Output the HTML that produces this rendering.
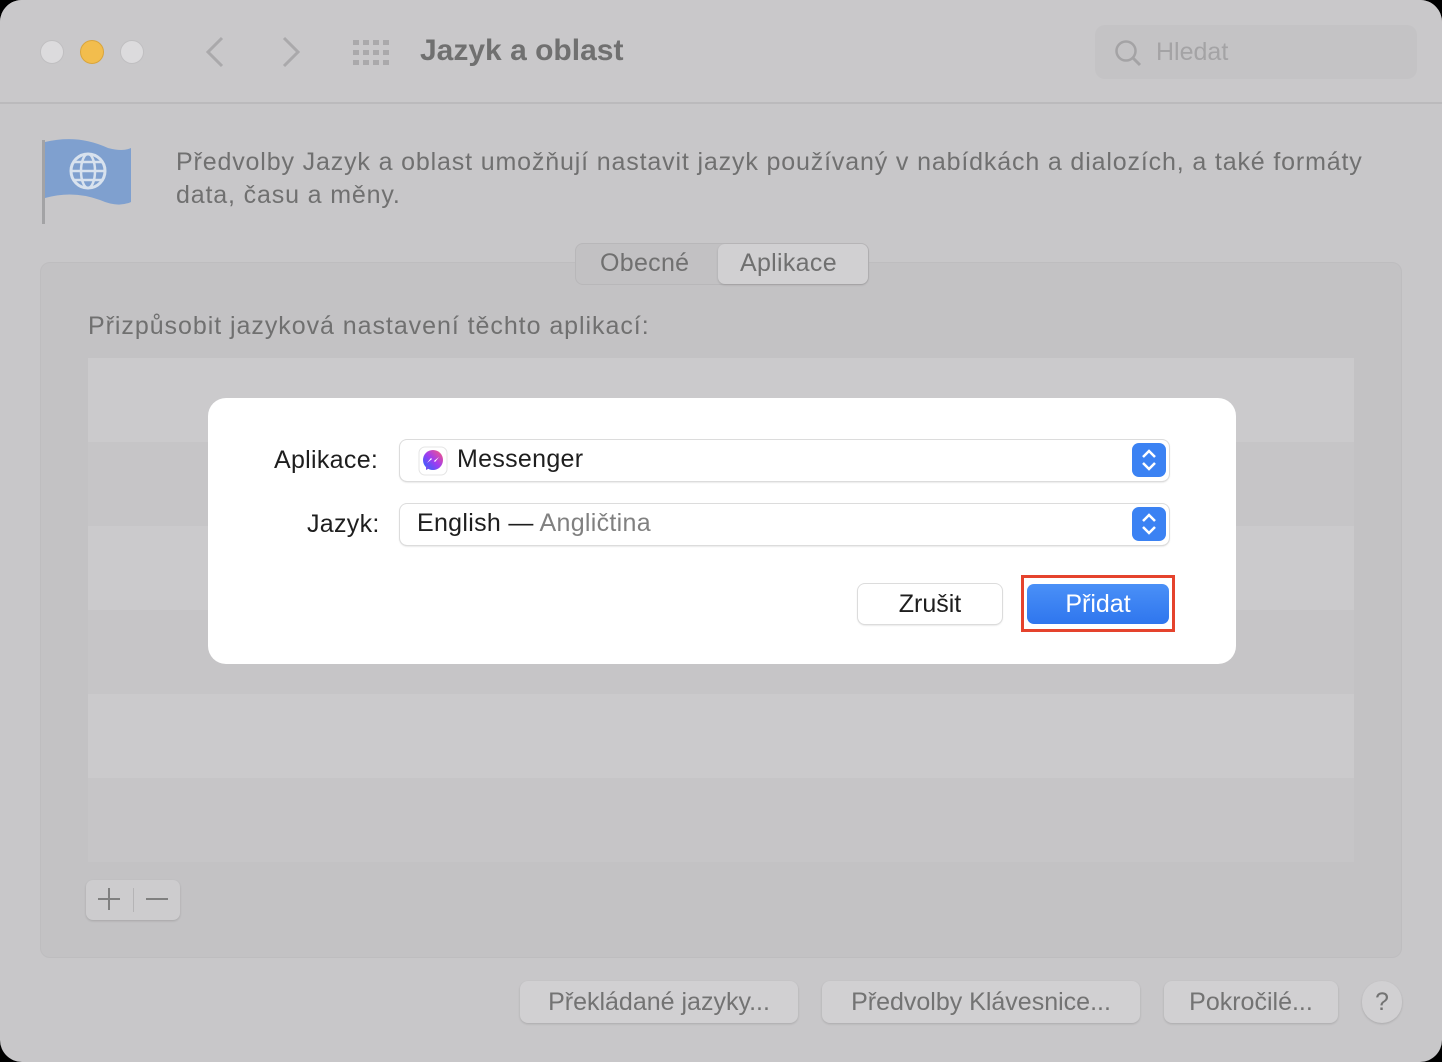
<!DOCTYPE html>
<html><head><meta charset="utf-8"><style>
*{margin:0;padding:0;box-sizing:border-box}
body{width:1442px;height:1062px;background:#000;font-family:"Liberation Sans",sans-serif;overflow:hidden;position:relative}
.win{position:absolute;left:0;top:0;width:1442px;height:1062px;background:#c8c7c9;border-radius:22px 22px 22px 22px;overflow:hidden}
.tb{position:absolute;left:0;top:0;width:1442px;height:104px;background:#c9c8ca;border-bottom:2px solid #bbbabc}
.dot{position:absolute;top:40px;width:24px;height:24px;border-radius:50%;background:#dcdbdd;border:1px solid #c0bfc1}
.abs{position:absolute}
.t{color:#707070;letter-spacing:0.3px}
.btn{position:absolute;height:42px;background:#d1d0d2;border-radius:8px;box-shadow:0 1px 2px rgba(0,0,0,.15);color:#737373;font-size:25px;text-align:center;line-height:42px}
.row{position:absolute;left:88px;width:1266px;height:84px}
</style></head><body>
<div class="win">
<div class="tb">
<div class="dot" style="left:40px"></div>
<div class="dot" style="left:80px;background:#f2bd4d;border-color:#d9a53c"></div>
<div class="dot" style="left:120px"></div>
<svg class="abs" style="left:200px;top:34px" width="110" height="36"><path d="M22 4 L8 18 L22 32" stroke="#aaa9ab" stroke-width="3" fill="none"/><path d="M84 4 L98 18 L84 32" stroke="#aaa9ab" stroke-width="3" fill="none"/></svg>
<svg class="abs" style="left:353px;top:40px" width="38" height="26" fill="#aaa9ab">
<rect x="0" y="0" width="6" height="5"/><rect x="10" y="0" width="6" height="5"/><rect x="20" y="0" width="6" height="5"/><rect x="30" y="0" width="6" height="5"/>
<rect x="0" y="10" width="6" height="5"/><rect x="10" y="10" width="6" height="5"/><rect x="20" y="10" width="6" height="5"/><rect x="30" y="10" width="6" height="5"/>
<rect x="0" y="20" width="6" height="5"/><rect x="10" y="20" width="6" height="5"/><rect x="20" y="20" width="6" height="5"/><rect x="30" y="20" width="6" height="5"/></svg>
<div class="abs" style="left:420px;top:34px;font-size:30px;font-weight:bold;color:#707070">Jazyk a oblast</div>
<div class="abs" style="left:1095px;top:25px;width:322px;height:54px;background:#c4c3c5;border-radius:10px"></div>
<svg class="abs" style="left:1113px;top:38px" width="30" height="30"><circle cx="13" cy="13" r="9.5" stroke="#a4a3a5" stroke-width="2.5" fill="none"/><path d="M20 20 L27 27" stroke="#a4a3a5" stroke-width="3"/></svg>
<div class="abs" style="left:1156px;top:38px;font-size:25px;color:#a4a3a5">Hledat</div>
</div>
<svg class="abs" style="left:38px;top:136px" width="100" height="90">
<rect x="4" y="4" width="3" height="84" fill="#a3a3a5"/>
<path d="M7 6 Q40 -2 70 12 Q85 16 93 12 L93 66 Q80 72 62 64 Q35 54 7 62 Z" fill="#7fa0cf"/>
<circle cx="50" cy="35" r="17" fill="none" stroke="#d8e2ee" stroke-width="3"/>
<ellipse cx="50" cy="35" rx="7" ry="17" fill="none" stroke="#d8e2ee" stroke-width="2.5"/>
<path d="M33 35 H67 M36 26 H64 M36 44 H64" stroke="#d8e2ee" stroke-width="2.5"/>
</svg>
<div class="abs t" style="left:176px;top:146px;font-size:25px;line-height:33px;white-space:nowrap;letter-spacing:0.85px">Předvolby Jazyk a oblast umožňují nastavit jazyk používaný v nabídkách a dialozích, a také formáty<br>data, času a měny.</div>
<div class="abs" style="left:40px;top:262px;width:1362px;height:696px;background:#c3c2c4;border-radius:10px;border:1px solid #bebdbf"></div>
<div class="abs" style="left:575px;top:243px;width:294px;height:42px;background:#c2c1c3;border-radius:8px;border:1px solid #b8b7b9"></div>
<div class="abs" style="left:718px;top:244px;width:150px;height:40px;background:#d1d0d2;border-radius:7px;box-shadow:0 1px 2px rgba(0,0,0,.15)"></div>
<div class="abs t" style="left:600px;top:249px;font-size:25px">Obecné</div>
<div class="abs t" style="left:740px;top:249px;font-size:25px">Aplikace</div>
<div class="abs t" style="left:88px;top:312px;font-size:25px;letter-spacing:0.95px">Přizpůsobit jazyková nastavení těchto aplikací:</div>
<div class="row" style="top:358px;background:#cbcacc"></div>
<div class="row" style="top:442px;background:#c6c5c7"></div>
<div class="row" style="top:526px;background:#cbcacc"></div>
<div class="row" style="top:610px;background:#c6c5c7"></div>
<div class="row" style="top:694px;background:#cbcacc"></div>
<div class="row" style="top:778px;background:#c6c5c7"></div>
<div class="abs" style="left:86px;top:880px;width:94px;height:40px;background:#cdccce;border-radius:7px;box-shadow:0 1px 2px rgba(0,0,0,.15)"></div>
<div class="abs" style="left:133px;top:888px;width:1px;height:24px;background:#b5b4b6"></div>
<div class="abs" style="left:98px;top:898px;width:22px;height:2px;background:#808080"></div>
<div class="abs" style="left:108px;top:888px;width:2px;height:22px;background:#808080"></div>
<div class="abs" style="left:146px;top:898px;width:22px;height:2px;background:#808080"></div>
<div class="btn" style="left:520px;top:981px;width:278px">Překládané jazyky...</div>
<div class="btn" style="left:822px;top:981px;width:318px">Předvolby Klávesnice...</div>
<div class="btn" style="left:1164px;top:981px;width:174px">Pokročilé...</div>
<div class="btn" style="left:1362px;top:981px;width:40px;border-radius:20px">?</div>
<div class="abs" style="left:208px;top:398px;width:1028px;height:266px;background:#fff;border-radius:18px"></div>
<div class="abs" style="left:274px;top:446px;font-size:25px;color:#1e1e1e;letter-spacing:0.3px">Aplikace:</div>
<div class="abs" style="left:307px;top:510px;font-size:25px;color:#1e1e1e;letter-spacing:0.3px">Jazyk:</div>
<div class="abs" style="left:400px;top:440px;width:769px;height:41px;border-radius:7px;box-shadow:0 0 0 1px #dcdcdc,0 1px 2px rgba(0,0,0,.2)"></div>
<div class="abs" style="left:400px;top:504px;width:769px;height:41px;border-radius:7px;box-shadow:0 0 0 1px #dcdcdc,0 1px 2px rgba(0,0,0,.2)"></div>
<svg class="abs" style="left:418px;top:446px" width="30" height="30"><defs><linearGradient id="m" x1="0" y1="1" x2="1" y2="0"><stop offset="0" stop-color="#1a6bff"/><stop offset=".5" stop-color="#a03cf0"/><stop offset="1" stop-color="#ff5a7a"/></linearGradient></defs><rect x="1" y="1" width="28" height="28" rx="6" fill="#fff" stroke="#e5e5e5"/><circle cx="15" cy="14" r="10" fill="url(#m)"/><path d="M8 19 L8 24 L12 22Z" fill="#7050f0"/><path d="M9 17 L13 12 L16 15 L21 11 L17 16 L14 13Z" fill="#fff"/></svg>
<div class="abs" style="left:457px;top:445px;font-size:25px;color:#1e1e1e;letter-spacing:0.3px">Messenger</div>
<div class="abs" style="left:417px;top:509px;font-size:25px;color:#1e1e1e;letter-spacing:0.3px">English — <span style="color:#808080">Angličtina</span></div>
<svg class="abs" style="left:1132px;top:443px" width="34" height="34"><rect width="34" height="34" rx="7" fill="#3b82f3"/><path d="M11 14 L17 8 L23 14 M11 20 L17 26 L23 20" stroke="#fff" stroke-width="2.5" fill="none"/></svg>
<svg class="abs" style="left:1132px;top:507px" width="34" height="34"><rect width="34" height="34" rx="7" fill="#3b82f3"/><path d="M11 14 L17 8 L23 14 M11 20 L17 26 L23 20" stroke="#fff" stroke-width="2.5" fill="none"/></svg>
<div class="abs" style="left:858px;top:584px;width:144px;height:40px;background:#fff;border-radius:7px;box-shadow:0 0 0 1px #dcdcdc,0 1px 2px rgba(0,0,0,.2);text-align:center;line-height:40px;font-size:25px;color:#1e1e1e">Zrušit</div>
<div class="abs" style="left:1021px;top:575px;width:154px;height:57px;border:3px solid #e5432d"></div>
<div class="abs" style="left:1027px;top:584px;width:142px;height:40px;background:linear-gradient(#4a90f7,#2f76ee);border-radius:7px;text-align:center;line-height:40px;font-size:25px;color:#fff">Přidat</div>
</div>
</body></html>
